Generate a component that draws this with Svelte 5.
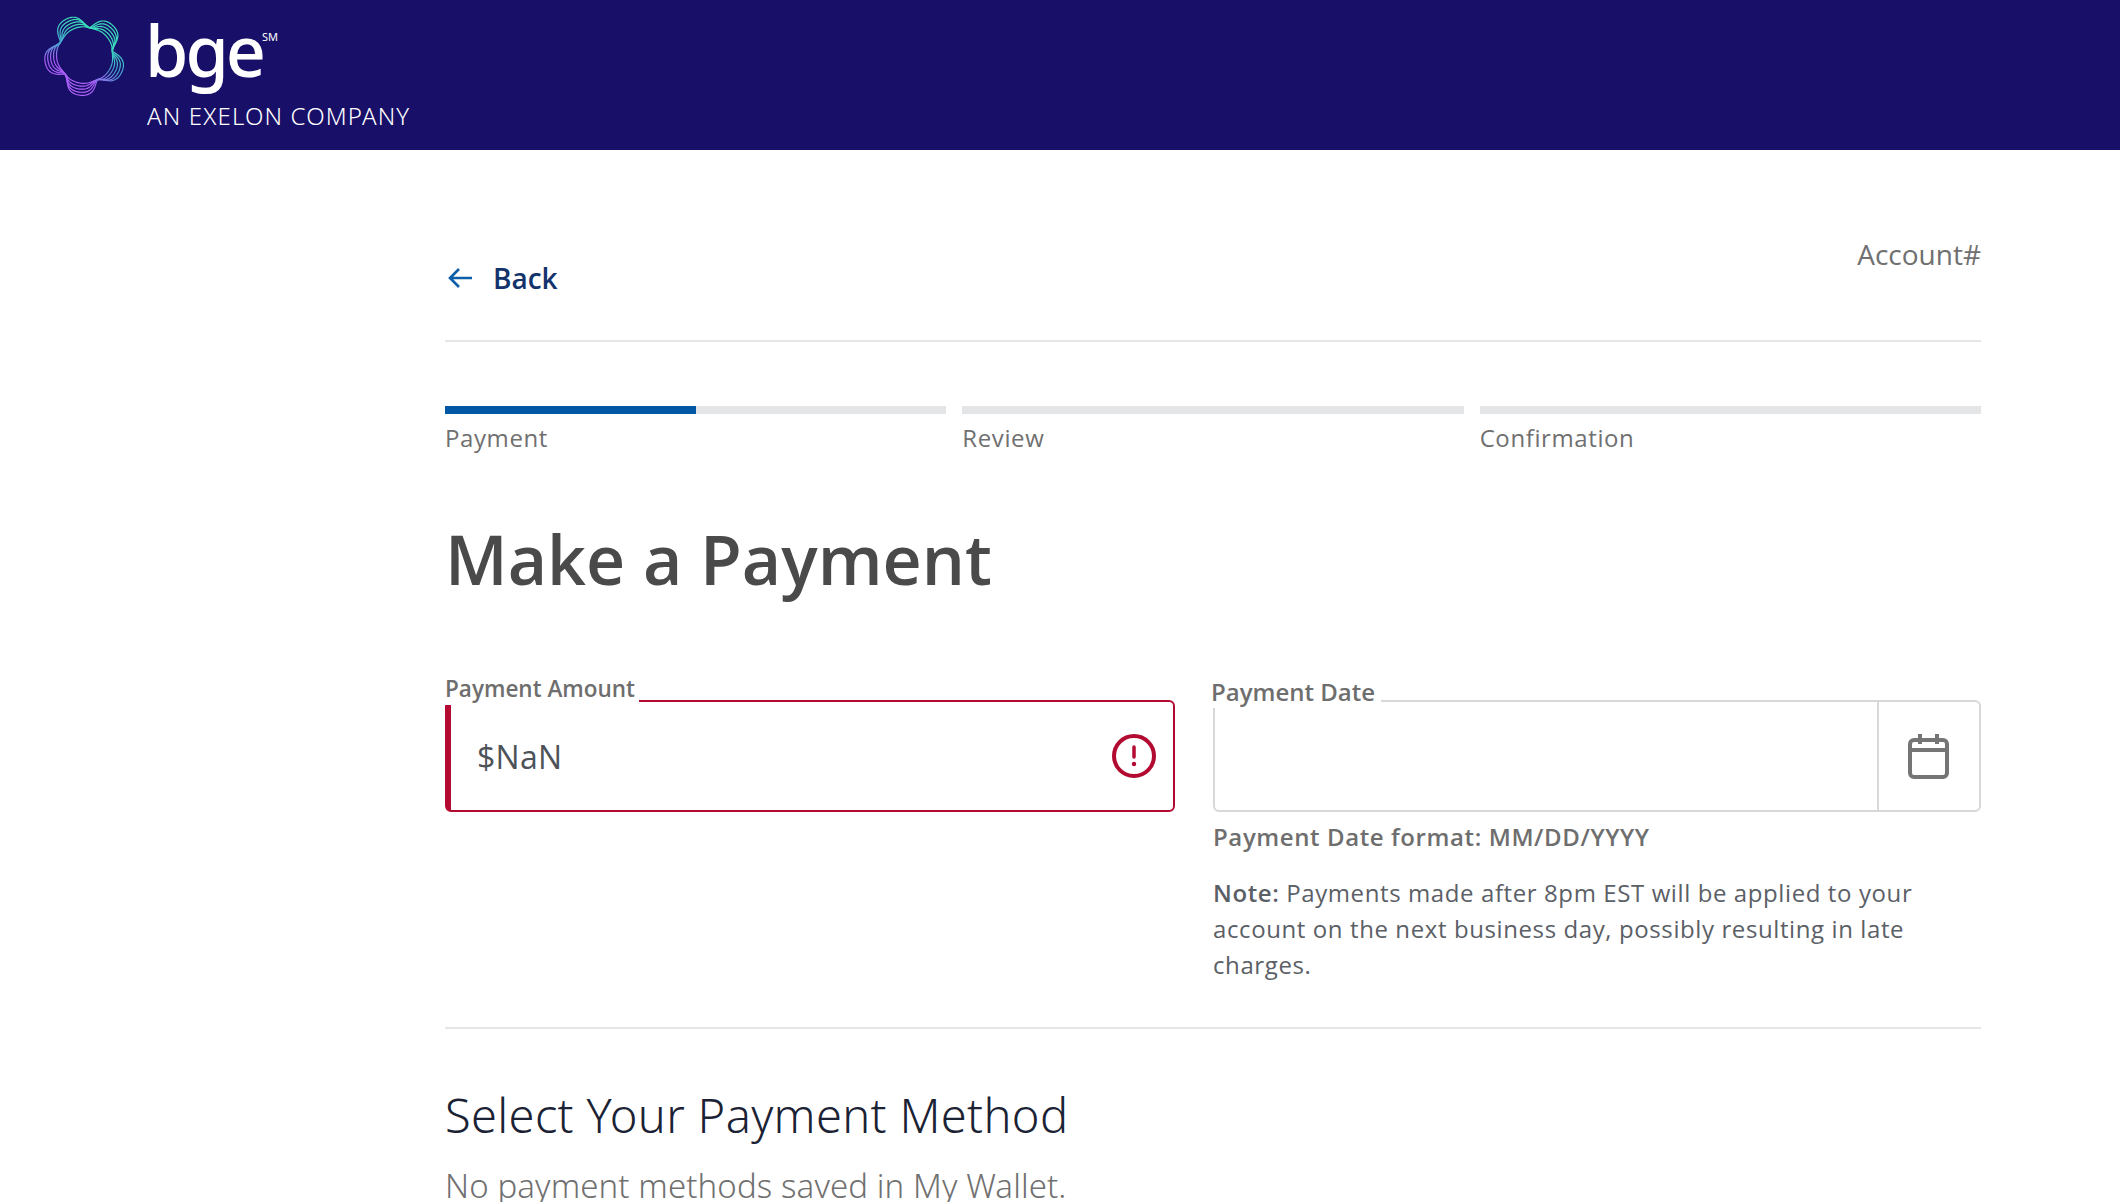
<script>
  const steps = [
    { label: "Payment", fill: 50 },
    { label: "Review", fill: 0 },
    { label: "Confirmation", fill: 0 },
  ]

  // the logo is a stack of wobbly five-lobed rings
  function ring(amp, shift) {
    const pts = []
    for (let i = 0; i < 200; i++) {
      const t = (i / 200) * Math.PI * 2
      const a = 5 * (t - shift)
      // lean the lobes to one side so they are not symmetric bumps
      const wave = 0.5 + 0.5 * Math.cos(a - 0.55 * Math.sin(a))
      const r = 27.5 + amp * wave
      pts.push(`${(43 + r * Math.cos(t)).toFixed(2)},${(44 + r * Math.sin(t)).toFixed(2)}`)
    }
    return "M" + pts.join("L") + "Z"
  }
  const rings = [
    [1, 0.6],
    [4, 0.56],
    [7, 0.52],
    [10, 0.48],
    [13, 0.44],
  ].map(([a, s]) => ring(a, s))
</script>

<div class="page">
  <header class="topbar">
    <svg class="mark" width="86" height="86" viewBox="0 0 86 86" fill="none">
      <defs>
        <linearGradient id="ringfill" x1="0.75" y1="0.05" x2="0.3" y2="0.95">
          <stop offset="0.2" stop-color="#3adcbc" />
          <stop offset="0.5" stop-color="#45a6d2" />
          <stop offset="0.8" stop-color="#a75cf5" />
          <stop offset="1" stop-color="#b266ff" />
        </linearGradient>
      </defs>
      {#each rings as d}
        <path {d} stroke="url(#ringfill)" stroke-width="1.2" />
      {/each}
    </svg>
    <div class="brand">
      <div class="wordmark">bge<sup>SM</sup></div>
      <div class="tagline">AN EXELON COMPANY</div>
    </div>
  </header>

  <main class="content">
    <div class="backrow">
      <a class="back" href="#back">
        <svg width="26" height="24" viewBox="0 0 26 24" fill="none" stroke="#0b5fa8" stroke-width="2.6">
          <path d="M25 12H3M12 3l-9 9 9 9" />
        </svg>
        <span>Back</span>
      </a>
      <span class="account">Account#</span>
    </div>

    <div class="steps">
      {#each steps as step}
        <div class="step">
          <div class="track"><div class="fill" style="width: {step.fill}%"></div></div>
          <span>{step.label}</span>
        </div>
      {/each}
    </div>

    <h1>Make a Payment</h1>

    <section class="fields">
      <div class="field amount">
        <label for="amount">Payment Amount</label>
        <div class="box error">
          <input id="amount" value="$NaN" />
          <svg width="44" height="44" viewBox="0 0 44 44" fill="none">
            <circle cx="22" cy="22" r="20" stroke="#b30a32" stroke-width="4" />
            <path d="M22 13v10" stroke="#b30a32" stroke-width="3.5" stroke-linecap="round" />
            <circle cx="22" cy="30" r="2.2" fill="#b30a32" />
          </svg>
        </div>
      </div>

      <div class="field date">
        <label for="date">Payment Date</label>
        <div class="box plain">
          <input id="date" />
          <div class="calendar">
            <svg width="42" height="46" viewBox="0 0 42 46" fill="none" stroke="#757575" stroke-width="4">
              <rect x="2" y="7" width="37" height="37" rx="4" />
              <path d="M2 17h37M12 1v10M29 1v10" />
            </svg>
          </div>
        </div>
        <p class="format">Payment Date format: MM/DD/YYYY</p>
        <p class="note"><b>Note:</b> Payments made after 8pm EST will be applied to your account on the next business day, possibly resulting in late charges.</p>
      </div>
    </section>

    <h2>Select Your Payment Method</h2>
    <p class="wallet">No payment methods saved in My Wallet.</p>
  </main>
</div>

<style>
  :global(body) {
    background: #fff;
  }

  .page {
    height: 1202px;
    overflow: hidden;
    font-family: "Open Sans", sans-serif;
  }

  .topbar {
    height: 150px;
    box-sizing: border-box;
    background: #180f68;
    display: flex;
    align-items: flex-start;
    padding: 11px 0 0 42px;
    gap: 19px;
    color: #fff;
  }

  .brand {
    font-family: "Noto Sans", sans-serif;
  }

  .wordmark {
    font-size: 70px;
    line-height: 78px;
    letter-spacing: -3px;
    font-weight: 500;
    position: relative;
    width: fit-content;
    margin-left: -2px;
  }

  .wordmark sup {
    position: absolute;
    top: 20px;
    left: 100%;
    font-size: 11px;
    line-height: 12px;
    font-weight: 400;
    letter-spacing: 0;
    margin-left: -1px;
  }

  .tagline {
    font-size: 24px;
    line-height: 30px;
    font-weight: 300;
    letter-spacing: 1.15px;
    margin-top: 12px;
  }

  .content {
    width: 1536px;
    margin-left: 445px;
  }

  .backrow {
    height: 192px;
    box-sizing: border-box;
    border-bottom: 2px solid #e6e6e6;
    display: flex;
    justify-content: space-between;
    align-items: flex-start;
  }

  .back {
    display: flex;
    align-items: center;
    gap: 20px;
    margin-top: 110px;
    padding-left: 2px;
    text-decoration: none;
    color: #12336b;
    font-size: 28px;
    line-height: 36px;
    font-weight: 600;
  }

  .account {
    margin-top: 86px;
    font-size: 28px;
    line-height: 36px;
    color: #707070;
  }

  .steps {
    display: flex;
    gap: 16px;
    margin-top: 64px;
  }

  .step {
    flex: 1;
    font-size: 24px;
    line-height: 32px;
    letter-spacing: 0.6px;
    color: #707070;
  }

  .track {
    height: 8px;
    background: #e4e5e6;
    margin-bottom: 8px;
  }

  .fill {
    height: 100%;
    background: #0058a4;
  }

  h1 {
    margin: 63px 0 0;
    font-size: 68px;
    line-height: 84px;
    font-weight: 600;
    color: #4a4a4a;
  }

  .fields {
    display: grid;
    grid-template-columns: 730px 768px;
    justify-content: space-between;
    margin-top: 71px;
    padding-bottom: 44px;
    border-bottom: 2px solid #e6e6e6;
  }

  .field {
    position: relative;
    padding-top: 28px;
  }

  label {
    position: absolute;
    left: 0;
    top: 1px;
    padding-right: 4px;
    background: #fff;
    font-size: 22.5px;
    line-height: 32px;
    font-weight: 600;
    color: #6e6e6e;
    z-index: 1;
  }

  .date label {
    left: -2px;
    top: 4px;
    padding-right: 6px;
    font-size: 24px;
  }

  .box {
    display: flex;
    align-items: center;
    height: 112px;
    box-sizing: border-box;
    border-radius: 6px;
  }

  .box input {
    flex: 1;
    min-width: 0;
    border: 0;
    outline: 0;
    background: transparent;
    font-family: inherit;
    font-size: 32px;
    letter-spacing: 0.3px;
    color: #4d5358;
    padding: 0;
  }

  .error {
    border: 2px solid #b30a32;
    border-left-width: 6px;
    padding: 0 17px 0 26px;
  }

  .plain {
    border: 2px solid #d8d8d8;
  }

  .calendar {
    width: 100px;
    height: 100%;
    border-left: 2px solid #d8d8d8;
    display: flex;
    align-items: center;
    justify-content: center;
  }

  .format {
    margin: 7px 0 0;
    font-size: 24px;
    line-height: 36px;
    font-weight: 600;
    letter-spacing: 0.6px;
    color: #6e6e6e;
  }

  .note {
    margin: 20px 0 0;
    font-size: 24px;
    line-height: 36px;
    letter-spacing: 0.6px;
    color: #5b6066;
  }

  .note b {
    font-weight: 600;
  }

  h2 {
    margin: 58px 0 0;
    font-family: "Noto Sans", sans-serif;
    font-size: 47px;
    line-height: 56px;
    font-weight: 300;
    letter-spacing: 0.35px;
    color: #1a2233;
  }

  .wallet {
    margin: 25px 0 0;
    font-family: "Noto Sans", sans-serif;
    font-size: 33px;
    line-height: 36px;
    font-weight: 300;
    letter-spacing: 0.1px;
    color: #707070;
  }
</style>
